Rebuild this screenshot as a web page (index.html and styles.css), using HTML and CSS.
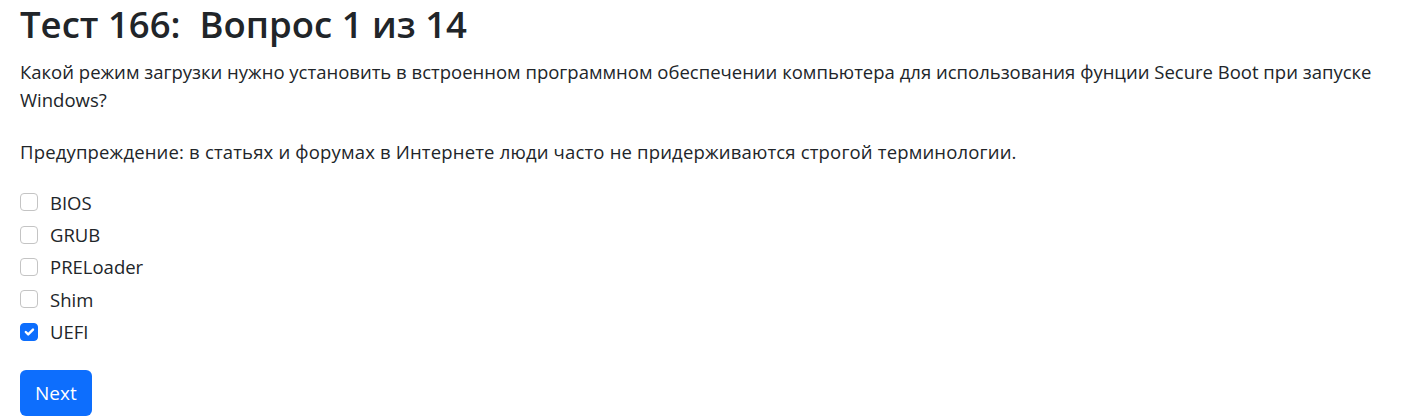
FILE: index.html
```html
<!DOCTYPE html>
<html lang="ru">
<head>
<meta charset="utf-8">
<title>Тест 166</title>
<link rel="stylesheet" href="styles.css">
</head>
<body>
<main class="quiz">
  <h1 class="quiz-title">Тест 166:&nbsp; Вопрос 1 из 14</h1>
  <p class="quiz-text">Какой режим загрузки нужно установить в встроенном программном обеспечении компьютера для использования фунции Secure Boot при запуске Windows?</p>
  <p class="quiz-text quiz-note">Предупреждение: в статьях и форумах в Интернете люди часто не придерживаются строгой терминологии.</p>
  <form class="quiz-form">
    <div class="options">
      <label class="option"><input type="checkbox" class="check"><span>BIOS</span></label>
      <label class="option"><input type="checkbox" class="check"><span>GRUB</span></label>
      <label class="option"><input type="checkbox" class="check"><span>PRELoader</span></label>
      <label class="option"><input type="checkbox" class="check"><span>Shim</span></label>
      <label class="option"><input type="checkbox" class="check" checked><span>UEFI</span></label>
    </div>
    <button type="button" class="btn-next">Next</button>
  </form>
</main>
</body>
</html>
```

FILE: styles.css
```css
html, body {
  margin: 0;
  padding: 0;
  background: #fff;
}
body {
  font-family: "Open Sans", "Noto Sans", sans-serif;
  color: #212529;
  font-size: 18.5px;
}
.quiz {
  padding: 0 16px 0 20px;
}
.quiz-title {
  margin: 0 0 10px;
  font-size: 36.5px;
  line-height: 48px;
  font-weight: 600;
  color: #212529;
}
.quiz-text {
  margin: 0 0 24px;
  line-height: 28px;
}
.quiz-note {
  margin-bottom: 20px;
  letter-spacing: 0.17px;
}
.options {
  display: flex;
  flex-direction: column;
}
.option {
  display: flex;
  align-items: center;
  gap: 12px;
  height: 32.4px;
}
.check {
  appearance: none;
  -webkit-appearance: none;
  margin: 0;
  width: 18px;
  height: 18px;
  border: 1px solid #c4c4c4;
  border-radius: 4px;
  background: #fff;
  flex: none;
}
.check:checked {
  background-color: #0d6efd;
  border-color: #0d6efd;
  background-image: url("data:image/svg+xml,%3csvg xmlns='http://www.w3.org/2000/svg' viewBox='0 0 20 20'%3e%3cpath fill='none' stroke='%23fff' stroke-linecap='round' stroke-linejoin='round' stroke-width='3' d='m6 10 3 3 6-6'/%3e%3c/svg%3e");
  background-size: 100% 100%;
}
.btn-next {
  margin-top: 22px;
  height: 46px;
  padding: 0 15px;
  border: 0;
  border-radius: 6px;
  background: #0d6efd;
  color: #fff;
  font-family: inherit;
  font-size: 19px;
}
```
